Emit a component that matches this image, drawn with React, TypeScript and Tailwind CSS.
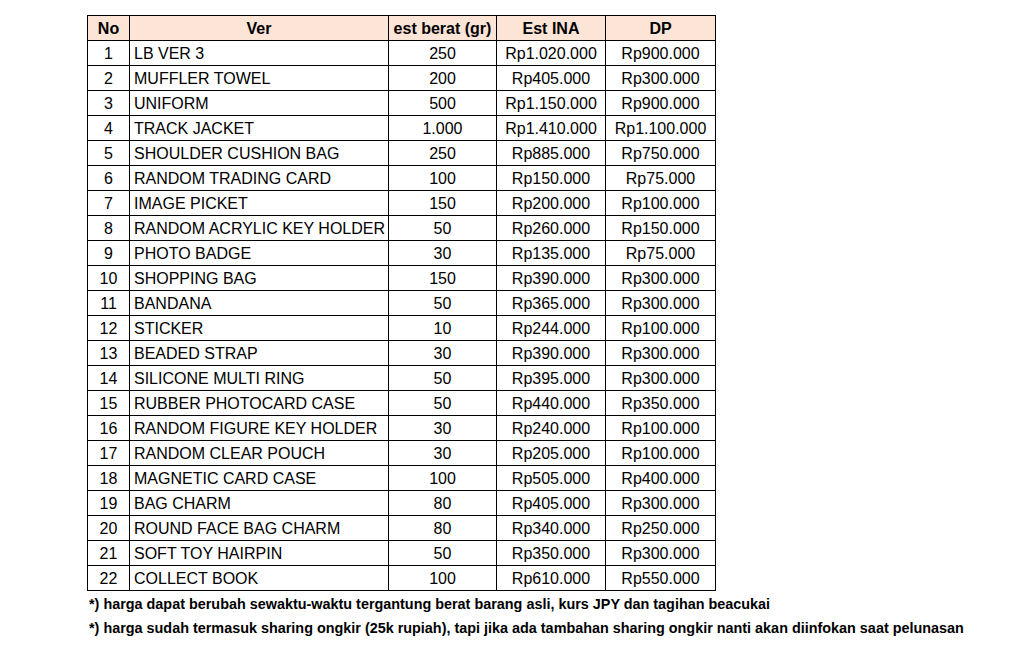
const items: [string, string, string, string][] = [
  ['LB VER 3', '250', 'Rp1.020.000', 'Rp900.000'],
  ['MUFFLER TOWEL', '200', 'Rp405.000', 'Rp300.000'],
  ['UNIFORM', '500', 'Rp1.150.000', 'Rp900.000'],
  ['TRACK JACKET', '1.000', 'Rp1.410.000', 'Rp1.100.000'],
  ['SHOULDER CUSHION BAG', '250', 'Rp885.000', 'Rp750.000'],
  ['RANDOM TRADING CARD', '100', 'Rp150.000', 'Rp75.000'],
  ['IMAGE PICKET', '150', 'Rp200.000', 'Rp100.000'],
  ['RANDOM ACRYLIC KEY HOLDER', '50', 'Rp260.000', 'Rp150.000'],
  ['PHOTO BADGE', '30', 'Rp135.000', 'Rp75.000'],
  ['SHOPPING BAG', '150', 'Rp390.000', 'Rp300.000'],
  ['BANDANA', '50', 'Rp365.000', 'Rp300.000'],
  ['STICKER', '10', 'Rp244.000', 'Rp100.000'],
  ['BEADED STRAP', '30', 'Rp390.000', 'Rp300.000'],
  ['SILICONE MULTI RING', '50', 'Rp395.000', 'Rp300.000'],
  ['RUBBER PHOTOCARD CASE', '50', 'Rp440.000', 'Rp350.000'],
  ['RANDOM FIGURE KEY HOLDER', '30', 'Rp240.000', 'Rp100.000'],
  ['RANDOM CLEAR POUCH', '30', 'Rp205.000', 'Rp100.000'],
  ['MAGNETIC CARD CASE', '100', 'Rp505.000', 'Rp400.000'],
  ['BAG CHARM', '80', 'Rp405.000', 'Rp300.000'],
  ['ROUND FACE BAG CHARM', '80', 'Rp340.000', 'Rp250.000'],
  ['SOFT TOY HAIRPIN', '50', 'Rp350.000', 'Rp300.000'],
  ['COLLECT BOOK', '100', 'Rp610.000', 'Rp550.000'],
]

export default function App() {
  return (
    <div className="w-[1030px] h-[648px] bg-white text-black font-['Liberation_Sans',Arial,sans-serif] pt-[15px] pl-[87px] overflow-hidden">
      <table className="border-collapse table-fixed w-[628px] text-[16px] leading-none">
        <colgroup>
          <col className="w-[42px]" />
          <col className="w-[259px]" />
          <col className="w-[108px]" />
          <col className="w-[109px]" />
          <col className="w-[110px]" />
        </colgroup>
        <thead>
          <tr className="h-[25px] bg-[#fce4d6] font-bold">
            <th className="border border-black p-0 pt-[2px] text-center">No</th>
            <th className="border border-black p-0 pt-[2px] text-center">Ver</th>
            <th className="border border-black p-0 pt-[2px] text-center">est berat (gr)</th>
            <th className="border border-black p-0 pt-[2px] text-center">Est INA</th>
            <th className="border border-black p-0 pt-[2px] text-center">DP</th>
          </tr>
        </thead>
        <tbody>
          {items.map(([name, weight, ina, dp], i) => (
            <tr key={i} className="h-[25px]">
              <td className="border border-black p-0 pt-[2px] text-center">{i + 1}</td>
              <td className="border border-black p-0 pt-[2px] pl-[4px] text-left whitespace-nowrap">{name}</td>
              <td className="border border-black p-0 pt-[2px] text-center">{weight}</td>
              <td className="border border-black p-0 pt-[2px] text-center">{ina}</td>
              <td className="border border-black p-0 pt-[2px] text-center">{dp}</td>
            </tr>
          ))}
        </tbody>
      </table>

      {/* footnotes */}
      <div className="font-bold text-[14.4px] leading-[24px] pl-[2px] pt-[1px] whitespace-nowrap">
        <p>*) harga dapat berubah sewaktu-waktu tergantung berat barang asli, kurs JPY dan tagihan beacukai</p>
        <p>*) harga sudah termasuk sharing ongkir (25k rupiah), tapi jika ada tambahan sharing ongkir nanti akan diinfokan saat pelunasan</p>
      </div>
    </div>
  )
}
